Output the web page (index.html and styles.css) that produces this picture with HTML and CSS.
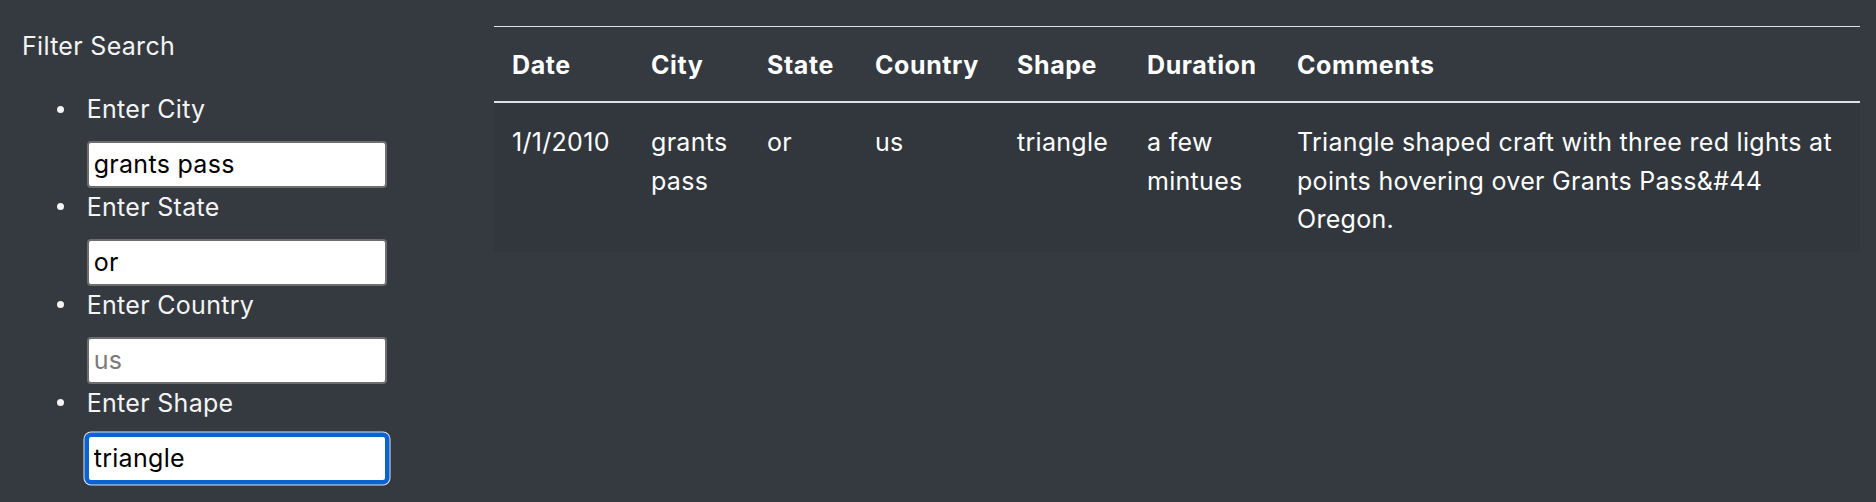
FILE: index.html
```html
<!DOCTYPE html>
<html lang="en">
<head>
<meta charset="utf-8">
<title>UFO Sightings</title>
<link rel="stylesheet" href="styles.css">
</head>
<body>
<div class="page">
  <aside class="sidebar">
    <div class="filter-title">Filter Search</div>
    <ul class="filters">
      <li class="filter">
        <label class="filter-label" for="city">Enter City</label>
        <input class="filter-input" id="city" type="text" value="grants pass">
      </li>
      <li class="filter">
        <label class="filter-label" for="state">Enter State</label>
        <input class="filter-input" id="state" type="text" value="or">
      </li>
      <li class="filter">
        <label class="filter-label" for="country">Enter Country</label>
        <input class="filter-input" id="country" type="text" placeholder="us">
      </li>
      <li class="filter">
        <label class="filter-label" for="shape">Enter Shape</label>
        <input class="filter-input is-focused" id="shape" type="text" value="triangle">
      </li>
    </ul>
  </aside>
  <main class="content">
    <table class="results">
      <colgroup>
        <col class="c-date">
        <col class="c-city">
        <col class="c-state">
        <col class="c-country">
        <col class="c-shape">
        <col class="c-duration">
        <col class="c-comments">
      </colgroup>
      <thead>
        <tr>
          <th>Date</th>
          <th>City</th>
          <th>State</th>
          <th>Country</th>
          <th>Shape</th>
          <th>Duration</th>
          <th>Comments</th>
        </tr>
      </thead>
      <tbody>
        <tr class="odd">
          <td>1/1/2010</td>
          <td>grants pass</td>
          <td>or</td>
          <td>us</td>
          <td>triangle</td>
          <td>a few mintues</td>
          <td>Triangle shaped craft with three red lights at points hovering over Grants Pass&amp;#44 Oregon.</td>
        </tr>
      </tbody>
    </table>
  </main>
</div>
</body>
</html>
```

FILE: styles.css
```css
html, body {
  margin: 0;
  padding: 0;
  background: #343a40;
}

body {
  font-family: Inter, "Noto Sans", "Liberation Sans", sans-serif;
  font-size: 25px;
  letter-spacing: 0.3px;
  color: #fff;
  width: 1876px;
  height: 502px;
  overflow: hidden;
}

.page {
  display: flex;
  align-items: flex-start;
}

.sidebar {
  width: 494px;
  flex: none;
  box-sizing: border-box;
  padding: 28px 0 0 22px;
}

.filter-title {
  line-height: 36px;
  color: #f4f4f4;
  margin-bottom: 27px;
}

.filters {
  margin: 0;
  padding: 0 0 0 34.7px;
  list-style: none;
  color: #f4f4f4;
}

.filter {
  display: grid;
  grid-template-columns: 30px 300px;
  align-items: center;
}

.filter::before {
  content: "";
  grid-column: 1;
  grid-row: 1;
  width: 7px;
  height: 7px;
  margin-left: 0;
  border-radius: 50%;
  background: #f4f4f4;
}

.filter-label {
  grid-column: 2;
  grid-row: 1;
  display: block;
  line-height: 36px;
}

.filter-input {
  grid-column: 2;
  grid-row: 2;
  display: block;
  box-sizing: border-box;
  width: 300px;
  height: 46.6px;
  margin: 14px 0 1.4px 0;
  padding: 0 5px;
  border: 2px solid #6e6e6e;
  border-radius: 4px;
  background: #fff;
  color: #000;
  font-family: Inter, "Noto Sans", "Liberation Sans", sans-serif;
  font-size: 25px;
  letter-spacing: 0.3px;
  outline: none;
}

.filter-input::placeholder {
  color: #7a7a7a;
}

.filter-input.is-focused {
  border: 2px solid #0b63ce;
  box-shadow: 0 0 0 2.5px #0b63ce, 0 0 0 3.5px #d9e2ee;
}

.content {
  flex: 1;
  padding: 26px 16px 0 0;
}

.results {
  width: 100%;
  table-layout: fixed;
  border-collapse: collapse;
  color: #fff;
}

.c-date { width: 139px; }
.c-city { width: 116px; }
.c-state { width: 108px; }
.c-country { width: 142px; }
.c-shape { width: 130px; }
.c-duration { width: 150px; }

.results th,
.results td {
  text-align: left;
  vertical-align: top;
  padding: 18.5px 18px 17px 18px;
  line-height: 38.5px;
}

.results th {
  font-weight: 700;
  letter-spacing: 0.6px;
  border-top: 1px solid #dee2e6;
  border-bottom: 2px solid #dee2e6;
}

.results td {
  font-weight: 400;
  padding-top: 20px;
  padding-bottom: 13.5px;
}

.results tr.odd {
  background: rgba(0, 0, 0, 0.05);
}
```
